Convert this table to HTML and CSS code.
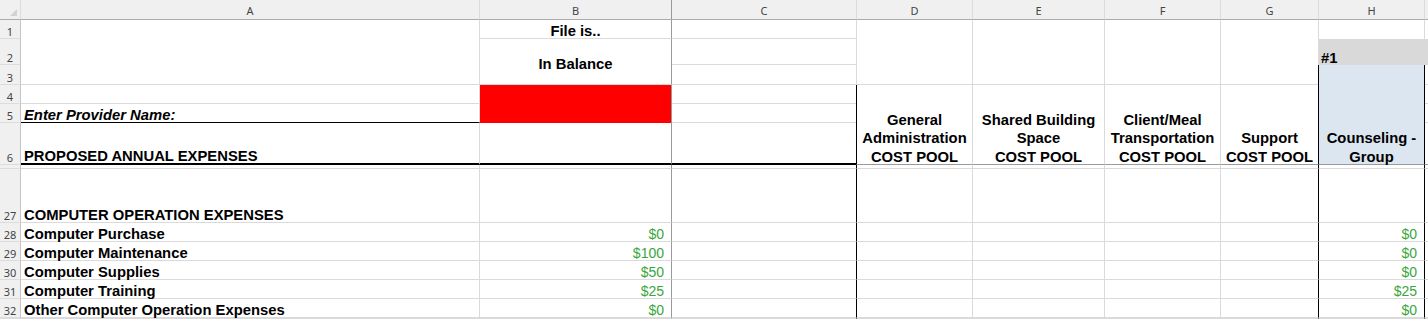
FILE: index.html
```html
<!DOCTYPE html>
<html>
<head>
<meta charset="utf-8">
<link rel="stylesheet" href="styles.css">
</head>
<body>
<div class="sheet">
  <!-- column headers -->
  <div class="cell ch c1 r1 corner"><span class="tri"></span></div>
  <div class="cell ch c2 r1">A</div>
  <div class="cell ch c3 r1 frz">B</div>
  <div class="cell ch c4 r1">C</div>
  <div class="cell ch c5 r1">D</div>
  <div class="cell ch c6 r1">E</div>
  <div class="cell ch c7 r1">F</div>
  <div class="cell ch c8 r1">G</div>
  <div class="cell ch c9 r1">H</div>
  <div class="cell ch c10 r1"></div>

  <!-- row 1 -->
  <div class="cell rh c1 r2">1</div>
  <div class="cell c2 r2 rs3"></div>
  <div class="cell c3 r2 frz center">File is..</div>
  <div class="cell c4 r2"></div>
  <div class="cell c5 r2 rs3"></div>
  <div class="cell c6 r2 rs3"></div>
  <div class="cell c7 r2 rs3"></div>
  <div class="cell c8 r2 rs3"></div>
  <div class="cell c9 r2 nobot"></div>
  <div class="cell c10 r2 nobot"></div>

  <!-- row 2 -->
  <div class="cell rh c1 r3">2</div>
  <div class="cell c3 r3 rs2 frz center mid">In Balance</div>
  <div class="cell c4 r3"></div>
  <div class="cell c9 r3 grey noline">#1</div>
  <div class="cell c10 r3 grey noline"></div>

  <!-- row 3 -->
  <div class="cell rh c1 r4">3</div>
  <div class="cell c4 r4"></div>
  <div class="cell c9 r4 rs4 blue lbk rbk hdr6 center"><span class="wrap">Counseling -<br>Group</span></div>
  <div class="cell c10 r4"></div>

  <!-- row 4 -->
  <div class="cell rh c1 r5">4</div>
  <div class="cell c2 r5"></div>
  <div class="cell c3 r5 rs2 frz red"></div>
  <div class="cell c4 r5"></div>
  <div class="cell c5 r5 rs3 lbk hdr6 center"><span class="wrap">General<br>Administration<br>COST POOL</span></div>
  <div class="cell c6 r5 rs3 hdr6 center"><span class="wrap">Shared Building<br>Space<br>COST POOL</span></div>
  <div class="cell c7 r5 rs3 hdr6 center"><span class="wrap">Client/Meal<br>Transportation<br>COST POOL</span></div>
  <div class="cell c8 r5 rs3 hdr6 center"><span class="wrap">Support<br>COST POOL</span></div>
  <div class="cell c10 r5"></div>

  <!-- row 5 -->
  <div class="cell rh c1 r6">5</div>
  <div class="cell c2 r6 bbk ital">Enter Provider Name:</div>
  <div class="cell c4 r6"></div>
  <div class="cell c10 r6"></div>

  <!-- row 6 -->
  <div class="cell rh c1 r7">6</div>
  <div class="cell c2 r7 bthick">PROPOSED ANNUAL EXPENSES</div>
  <div class="cell c3 r7 frz bthick"></div>
  <div class="cell c4 r7 bthick"></div>
  <div class="cell c10 r7 hdr6"></div>

  <!-- freeze gap -->
  <div class="cell rh c1 r8"></div>
  <div class="cell c2 r8"></div>
  <div class="cell c3 r8 frz"></div>
  <div class="cell c4 r8"></div>
  <div class="cell c5 r8 lbk"></div>
  <div class="cell c6 r8"></div>
  <div class="cell c7 r8"></div>
  <div class="cell c8 r8"></div>
  <div class="cell c9 r8 lbk rbk"></div>
  <div class="cell c10 r8"></div>

  <!-- row 27 -->
  <div class="cell rh c1 r9">27</div>
  <div class="cell c2 r9">COMPUTER OPERATION EXPENSES</div>
  <div class="cell c3 r9 frz"></div>
  <div class="cell c4 r9"></div>
  <div class="cell c5 r9 lbk"></div>
  <div class="cell c6 r9"></div>
  <div class="cell c7 r9"></div>
  <div class="cell c8 r9"></div>
  <div class="cell c9 r9 lbk rbk"></div>
  <div class="cell c10 r9"></div>

  <!-- row 28 -->
  <div class="cell rh c1 r10">28</div>
  <div class="cell c2 r10">Computer Purchase</div>
  <div class="cell c3 r10 frz num">$0</div>
  <div class="cell c4 r10"></div>
  <div class="cell c5 r10 lbk"></div>
  <div class="cell c6 r10"></div>
  <div class="cell c7 r10"></div>
  <div class="cell c8 r10"></div>
  <div class="cell c9 r10 lbk rbk num">$0</div>
  <div class="cell c10 r10"></div>

  <!-- row 29 -->
  <div class="cell rh c1 r11">29</div>
  <div class="cell c2 r11">Computer Maintenance</div>
  <div class="cell c3 r11 frz num">$100</div>
  <div class="cell c4 r11"></div>
  <div class="cell c5 r11 lbk"></div>
  <div class="cell c6 r11"></div>
  <div class="cell c7 r11"></div>
  <div class="cell c8 r11"></div>
  <div class="cell c9 r11 lbk rbk num">$0</div>
  <div class="cell c10 r11"></div>

  <!-- row 30 -->
  <div class="cell rh c1 r12">30</div>
  <div class="cell c2 r12">Computer Supplies</div>
  <div class="cell c3 r12 frz num">$50</div>
  <div class="cell c4 r12"></div>
  <div class="cell c5 r12 lbk"></div>
  <div class="cell c6 r12"></div>
  <div class="cell c7 r12"></div>
  <div class="cell c8 r12"></div>
  <div class="cell c9 r12 lbk rbk num">$0</div>
  <div class="cell c10 r12"></div>

  <!-- row 31 -->
  <div class="cell rh c1 r13">31</div>
  <div class="cell c2 r13">Computer Training</div>
  <div class="cell c3 r13 frz num">$25</div>
  <div class="cell c4 r13"></div>
  <div class="cell c5 r13 lbk"></div>
  <div class="cell c6 r13"></div>
  <div class="cell c7 r13"></div>
  <div class="cell c8 r13"></div>
  <div class="cell c9 r13 lbk rbk num">$25</div>
  <div class="cell c10 r13"></div>

  <!-- row 32 -->
  <div class="cell rh c1 r14">32</div>
  <div class="cell c2 r14">Other Computer Operation Expenses</div>
  <div class="cell c3 r14 frz num">$0</div>
  <div class="cell c4 r14"></div>
  <div class="cell c5 r14 lbk"></div>
  <div class="cell c6 r14"></div>
  <div class="cell c7 r14"></div>
  <div class="cell c8 r14"></div>
  <div class="cell c9 r14 lbk rbk num">$0</div>
  <div class="cell c10 r14"></div>

  <!-- partial row 33 -->
  <div class="cell rh c1 r15"></div>
  <div class="cell c2 r15"></div>
  <div class="cell c3 r15 frz"></div>
  <div class="cell c4 r15"></div>
  <div class="cell c5 r15 lbk"></div>
  <div class="cell c6 r15"></div>
  <div class="cell c7 r15"></div>
  <div class="cell c8 r15"></div>
  <div class="cell c9 r15 lbk rbk"></div>
  <div class="cell c10 r15"></div>
</div>
</body>
</html>
```
FILE: styles.css
```css
html, body {
  margin: 0;
  padding: 0;
  background: #ffffff;
  overflow: hidden;
}

.sheet {
  display: grid;
  width: 1428px;
  height: 319px;
  overflow: hidden;
  grid-template-columns: 21px 459px 192px 185px 116px 132px 116px 98px 106px 1fr;
  grid-template-rows: 20px 19px 26px 20px 19px 19px 42px 4px 54px 19px 19px 19px 19px 19px 1fr;
  font-family: "Liberation Sans", Arial, sans-serif;
}

.cell {
  box-sizing: border-box;
  display: flex;
  align-items: flex-end;
  border-right: 1px solid #dadada;
  border-bottom: 1px solid #dadada;
  padding: 0 3px 0 3px;
  font-size: 14.8px;
  font-weight: bold;
  color: #000;
  white-space: nowrap;
  line-height: 14px;
  min-width: 0;
}

/* columns */
.c1 { grid-column-start: 1; }
.c2 { grid-column-start: 2; }
.c3 { grid-column-start: 3; }
.c4 { grid-column-start: 4; }
.c5 { grid-column-start: 5; }
.c6 { grid-column-start: 6; }
.c7 { grid-column-start: 7; }
.c8 { grid-column-start: 8; }
.c9 { grid-column-start: 9; }
.c10 { grid-column-start: 10; overflow: hidden; }

/* rows */
.r1 { grid-row-start: 1; }
.r2 { grid-row-start: 2; }
.r3 { grid-row-start: 3; }
.r4 { grid-row-start: 4; }
.r5 { grid-row-start: 5; }
.r6 { grid-row-start: 6; }
.r7 { grid-row-start: 7; }
.r8 { grid-row-start: 8; }
.r9 { grid-row-start: 9; }
.r10 { grid-row-start: 10; }
.r11 { grid-row-start: 11; }
.r12 { grid-row-start: 12; }
.r13 { grid-row-start: 13; }
.r14 { grid-row-start: 14; }
.r15 { grid-row-start: 15; }

.rs2 { grid-row-end: span 2; }
.rs3 { grid-row-end: span 3; }
.rs4 { grid-row-end: span 4; }

/* headers */
.ch {
  background: #f0f0f0;
  border-bottom: 1px solid #ababab;
  border-right: 1px solid #dcdcdc;
  justify-content: center;
  align-items: center;
  padding: 2px 0 0 0;
  font-family: "Noto Sans", "DejaVu Sans", sans-serif;
  font-size: 11px;
  font-weight: normal;
  color: #444;
}

.corner {
  justify-content: flex-end;
  align-items: flex-end;
  padding: 0 3px 3px 0;
}

.tri {
  width: 0;
  height: 0;
  border-left: 7px solid transparent;
  border-bottom: 7px solid #d2d2d2;
}

.rh {
  background: #f0f0f0;
  border-right: 1px solid #c6c6c6;
  border-bottom: 1px solid #dcdcdc;
  justify-content: center;
  padding: 0;
  font-family: "Noto Sans", "DejaVu Sans", sans-serif;
  font-size: 11px;
  font-weight: normal;
  color: #444;
  line-height: 13px;
}

/* cell styles */
.center { justify-content: center; text-align: center; }
.mid { align-items: center; padding-top: 4px; }
.ital { font-style: italic; }
.frz { border-right-color: #999999; }
.nobot { border-bottom: none; }
.noline { border-bottom: none; border-right: none; }
.grey { background: #d9d9d9; padding-left: 2px; }
.blue { background: #dce6f1; }
.red { background: #ff0000; border-bottom: none; }
.bbk { border-bottom: 1px solid #000; }
.bthick { border-bottom: 2px solid #000; }

.lbk {
  margin-left: -1px;
  border-left: 1px solid #000;
  z-index: 1;
}
.rbk { border-right: 1px solid #000; }

.hdr6 {
  white-space: normal;
  border-bottom: 1px solid #9a9a9a;
  padding-bottom: 0;
}

.wrap {
  display: block;
  line-height: 18.5px;
  margin-bottom: -2px;
}

.num {
  justify-content: flex-end;
  padding-right: 7px;
  font-weight: normal;
  font-size: 14px;
  color: #3aa63c;
}
```
